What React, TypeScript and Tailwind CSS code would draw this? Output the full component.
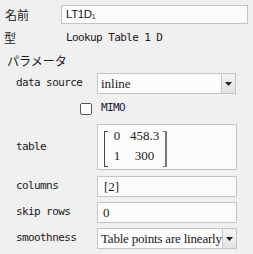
import React from "react";

const JP = "font-['Noto_Sans_CJK_JP',sans-serif] text-[12px]";
const MONO = "font-['DejaVu_Sans_Mono',monospace] text-[11px] tracking-[-0.6px] whitespace-nowrap";
const SERIF = "font-['Liberation_Serif',serif] text-[13px]";

function Arrow() {
  return (
    <div className="w-[14px] h-full border-l border-[#c8c8c8] bg-gradient-to-b from-[#f4f4f4] to-[#e2e2e2] flex items-center justify-center shrink-0">
      <svg width="7" height="4" viewBox="0 0 7 4">
        <polygon points="0,0 7,0 3.5,4" fill="#222" />
      </svg>
    </div>
  );
}

function Label({ children }: { children: React.ReactNode }) {
  return <div className={`w-[97px] pl-[16px] shrink-0 ${MONO}`}>{children}</div>;
}

function Field({ children }: { children: React.ReactNode }) {
  return (
    <div className={`w-[140px] h-full border border-[#c4c4c4] bg-[#fcfcfc] flex items-center pl-[3px] overflow-hidden ${SERIF}`}>
      {children}
    </div>
  );
}

export default function App() {
  return (
    <div className="w-[253px] h-[254px] bg-[#f0f0f0] overflow-hidden text-[#1a1a1a] flex flex-col">
      <div className="flex items-center h-[19px] mt-[5px]">
        <div className={`w-[61px] pl-[5px] shrink-0 ${JP}`}>名前</div>
        <div className="w-[187px] h-full border border-[#c4c4c4] bg-[#fcfcfc] flex items-center pl-[4px] font-['Liberation_Sans',sans-serif] text-[11.5px] tracking-[-0.4px]">
          LT1D<span className="text-[7px] translate-y-[3px]">1</span>
        </div>
      </div>

      <div className="flex items-center h-[16px] mt-[6px]">
        <div className={`w-[61px] pl-[4px] shrink-0 ${JP}`}>型</div>
        <div className={`pl-[5px] ${MONO}`}>Lookup Table 1 D</div>
      </div>

      <div className={`flex items-center h-[16px] mt-[7px] pl-[7px] ${JP}`}>パラメータ</div>

      <div className="flex items-center h-[21px] mt-[4px]">
        <Label>data source</Label>
        <div className={`w-[139px] h-full border border-[#c4c4c4] bg-[#fcfcfc] flex items-center ${SERIF}`}>
          <div className="flex-1 pl-[3px] whitespace-nowrap overflow-hidden">inline</div>
          <Arrow />
        </div>
      </div>

      <div className="flex items-center h-[13px] mt-[8px] pl-[80px]">
        <div className="w-[12px] h-[12px] border border-[#555] rounded-[2px] bg-white shrink-0" />
        <div className={`ml-[9px] text-[#1a1a3a] ${MONO}`}>MIMO</div>
      </div>

      <div className="flex items-center h-[46px] mt-[9px]">
        <Label>table</Label>
        <div className={`w-[140px] h-full border border-[#c4c4c4] bg-[#fcfcfc] pl-[6px] pt-[1px] flex ${SERIF}`}>
          <div className="flex">
            <div className="w-[4px] h-[36px] mt-[5px] border-l border-t border-b border-[#444]" />
            <div className="grid grid-cols-[18px_37px] grid-rows-[20px_20px] items-center text-center">
              <div>0</div>
              <div>458.3</div>
              <div>1</div>
              <div>300</div>
            </div>
            <div className="w-[4px] h-[36px] mt-[5px] border-r-2 border-t border-b border-[#777]" />
          </div>
        </div>
      </div>

      <div className="flex items-center h-[21px] mt-[6px]">
        <Label>columns</Label>
        <Field><span className="pl-[3px]">[2]</span></Field>
      </div>

      <div className="flex items-center h-[21px] mt-[5px]">
        <Label>skip rows</Label>
        <Field><span className="pl-[2px]">0</span></Field>
      </div>

      <div className="flex items-center h-[21px] mt-[5px]">
        <Label>smoothness</Label>
        <div className={`w-[140px] h-full border border-[#c4c4c4] bg-[#fcfcfc] flex items-center ${SERIF}`}>
          <div className="flex-1 pl-[3px] whitespace-nowrap overflow-hidden tracking-[-0.2px]">Table points are linearly interpolated</div>
          <Arrow />
        </div>
      </div>
    </div>
  );
}
